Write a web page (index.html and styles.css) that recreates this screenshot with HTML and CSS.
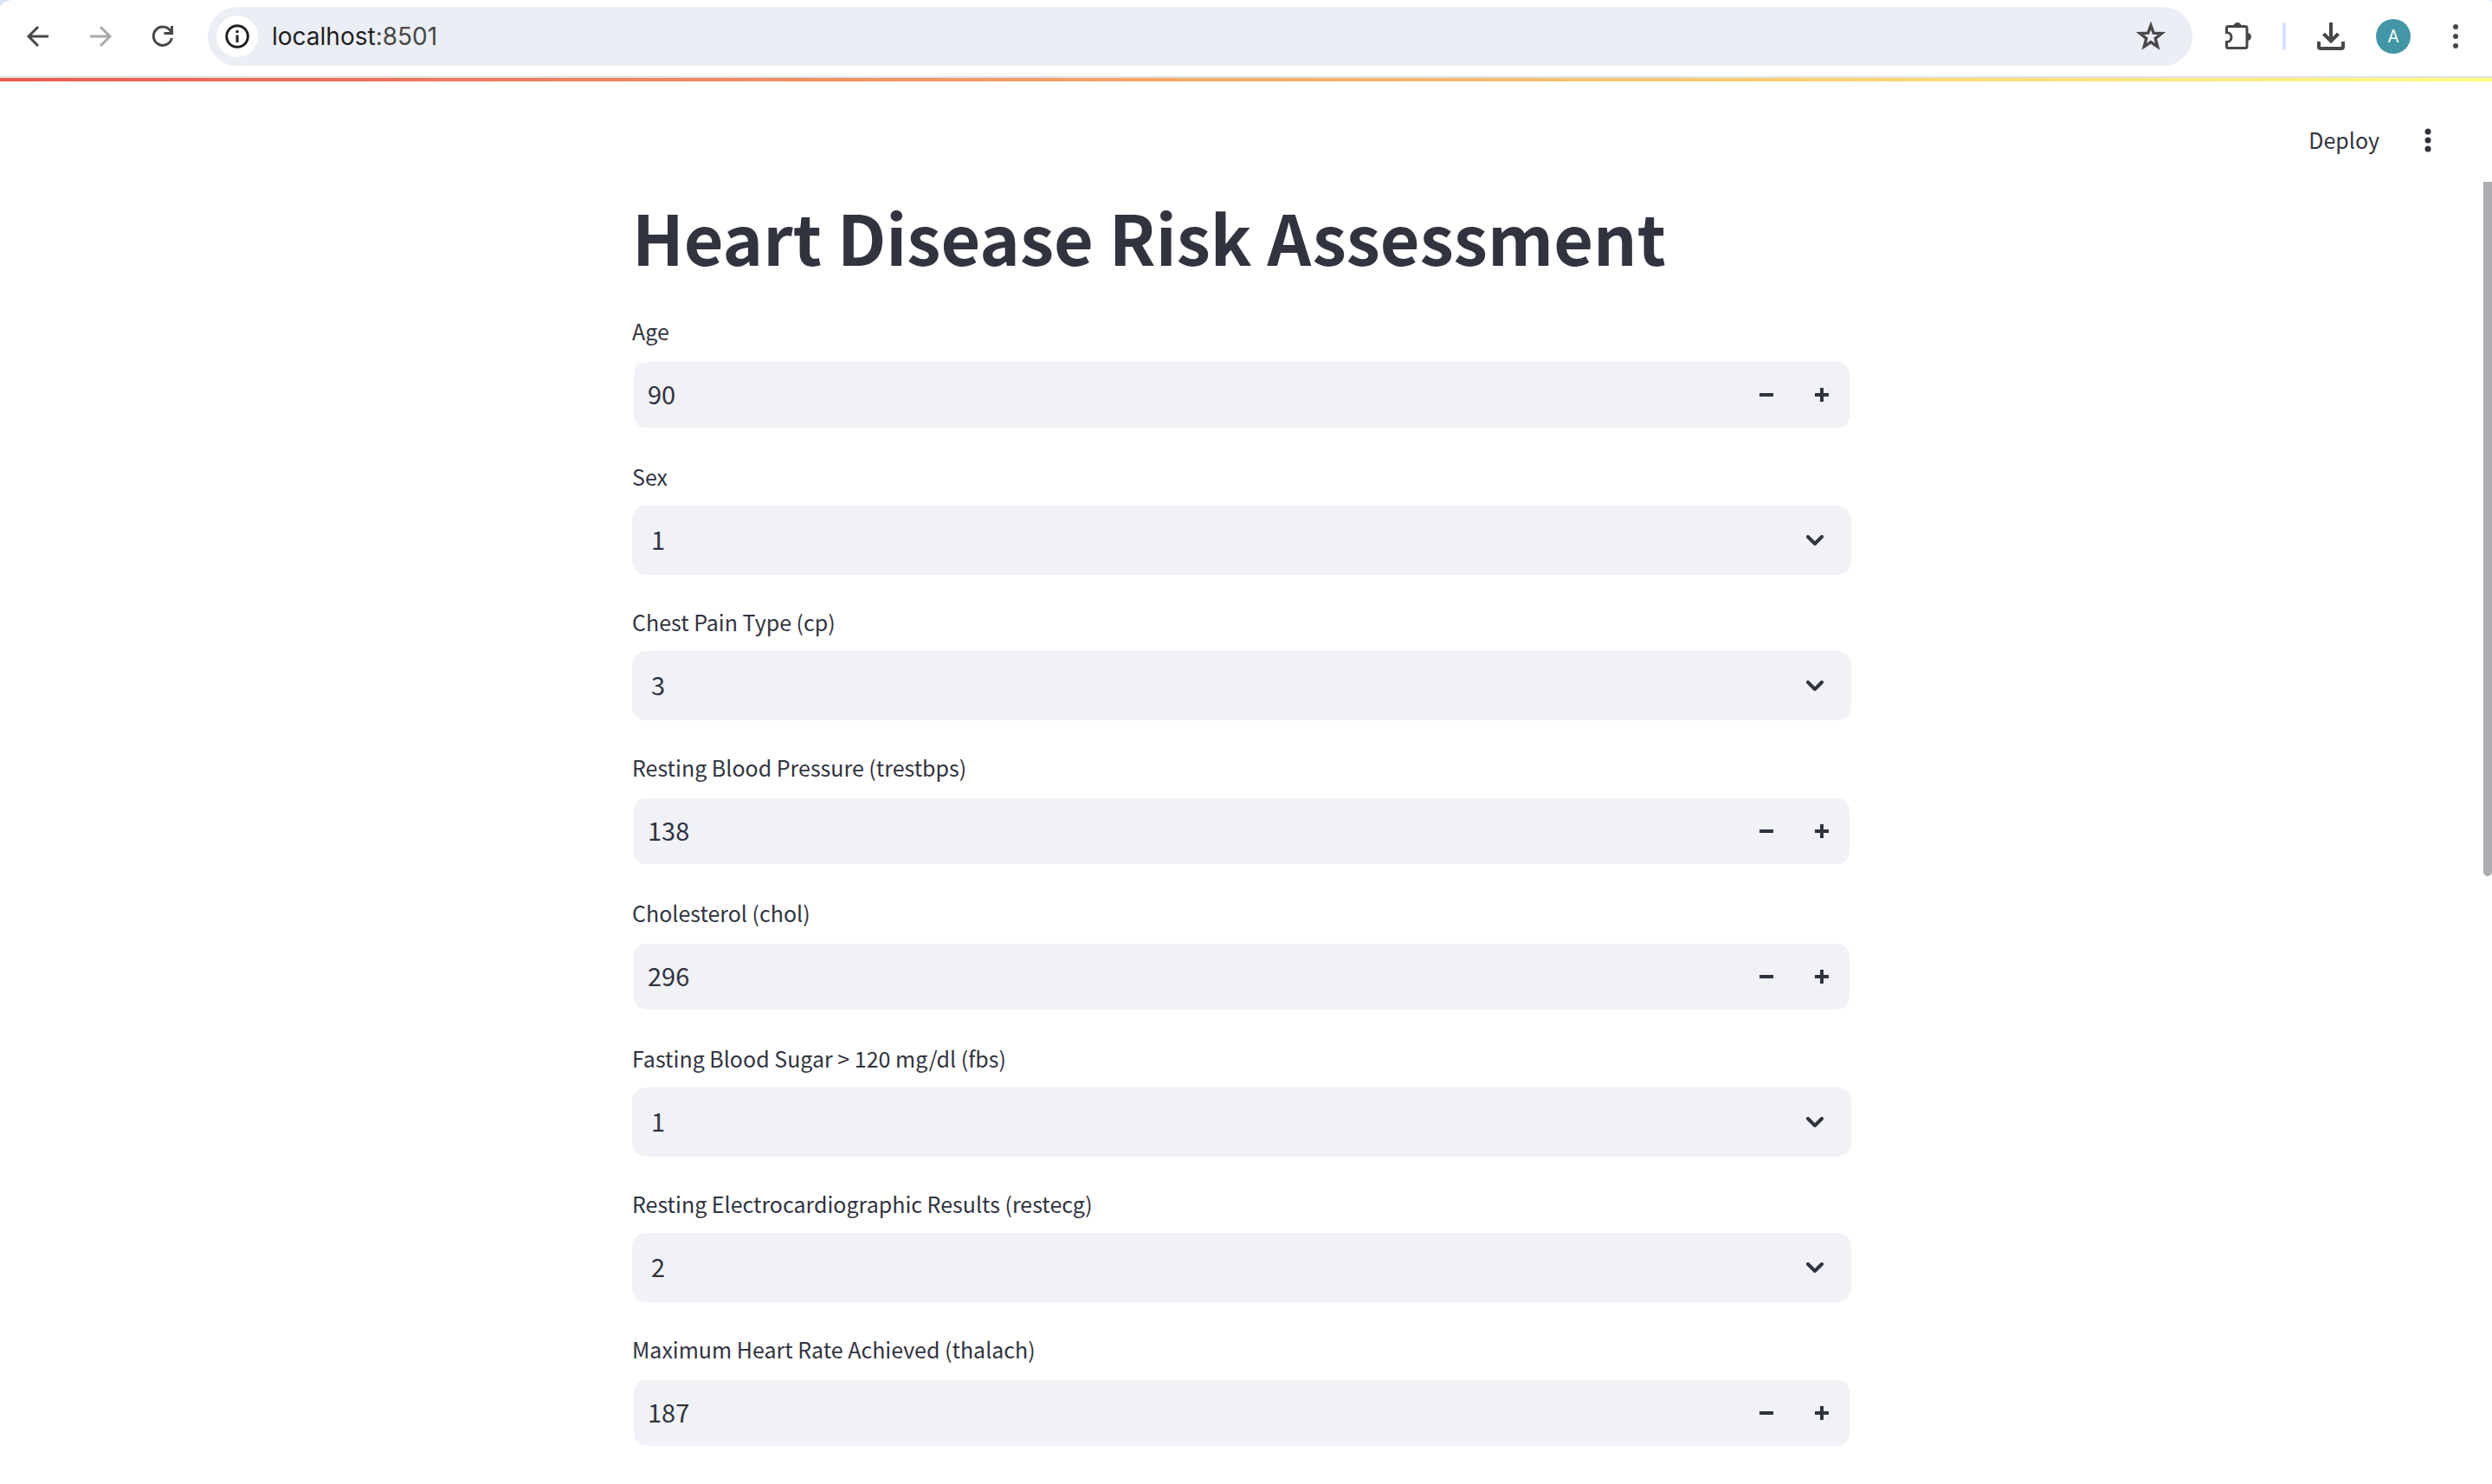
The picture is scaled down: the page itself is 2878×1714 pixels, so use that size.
FILE: index.html
```html
<!DOCTYPE html>
<html lang="en">
<head>
<meta charset="utf-8">
<title>Heart Disease Risk Assessment</title>
<link rel="stylesheet" href="styles.css">
</head>
<body>
<nav class="browser" aria-label="Browser toolbar">
  <button class="tool" type="button" aria-label="Back"><svg width="32" height="32" viewBox="0 0 32 32"><path d="M28 16H6M16 5L5 16L16 27" fill="none" stroke="#474747" stroke-width="3"/></svg></button>
  <button class="tool" type="button" aria-label="Forward" disabled><svg width="32" height="32" viewBox="0 0 32 32"><path d="M4 16H26M16 5L27 16L16 27" fill="none" stroke="#aaa" stroke-width="3"/></svg></button>
  <button class="tool" type="button" aria-label="Reload"><svg width="32" height="32" viewBox="0 0 32 32"><path d="M25.6 11A10.7 10.7 0 1 0 26.4 18" fill="none" stroke="#474747" stroke-width="3"/><path d="M26.500 4V12.500H17.500" fill="none" stroke="#474747" stroke-width="3"/></svg></button>
  <div class="address">
    <button class="site-info" type="button" aria-label="Site information"><svg width="32" height="32" viewBox="0 0 32 32"><circle cx="16" cy="16" r="12.300" fill="none" stroke="#1f1f1f" stroke-width="3"/><path d="M16 14.500V23" stroke="#1f1f1f" stroke-width="3"/><circle cx="16" cy="10.500" r="1.800" fill="#1f1f1f"/></svg></button>
    <a class="url" href="http://localhost:8501">localhost<span class="port">:8501</span></a>
    <button class="tool star" type="button" aria-label="Bookmark"><svg width="36" height="36" viewBox="0 0 36 36"><path d="M18 5.500L21.200 14.200L30.500 14.600L23.200 20.400L25.700 29.800L18 24.500L10.300 29.800L12.800 20.400L5.500 14.600L14.800 14.200Z" fill="none" stroke="#474747" stroke-width="3.400"/></svg></button>
  </div>
  <div class="actions">
    <button class="tool" type="button" aria-label="Extensions"><svg width="36" height="36" viewBox="0 0 36 36"><path d="M5.500 8.500a2 2 0 0 1 2-2H27a2 2 0 0 1 2 2V29.500a2 2 0 0 1-2 2H7.500a2 2 0 0 1-2-2V24.500a5.500 5.500 0 0 0 0-11Z" fill="none" stroke="#474747" stroke-width="3"/><path d="M13.500 6a4.500 4 0 0 1 9 0ZM29.500 14a4.500 4.500 0 0 1 0 9Z" fill="#474747"/></svg></button>
    <span class="divider"></span>
    <button class="tool" type="button" aria-label="Downloads"><svg width="36" height="36" viewBox="0 0 36 36"><path d="M18 2V23M9.500 15L18 23.500L26.500 15M4 24V30a2 2 0 0 0 2 2H30a2 2 0 0 0 2-2V24" fill="none" stroke="#474747" stroke-width="4"/></svg></button>
    <button class="avatar" type="button" aria-label="Profile">A</button>
    <button class="tool" type="button" aria-label="Browser menu"><svg width="36" height="36" viewBox="0 0 36 36" fill="#474747"><circle cx="18" cy="7" r="3"/><circle cx="18" cy="18" r="3"/><circle cx="18" cy="29" r="3"/></svg></button>
  </div>
</nav>
<div class="decoration"></div>
<header class="app-header">
  <button class="deploy" type="button">Deploy</button>
  <button class="tool" type="button" aria-label="App menu"><svg width="36" height="36" viewBox="0 0 36 36" fill="#31333f"><circle cx="18" cy="8" r="3.500"/><circle cx="18" cy="18" r="3.500"/><circle cx="18" cy="28" r="3.500"/></svg></button>
</header>
<div class="viewport">
  <main class="content">
    <h1 class="title">Heart Disease Risk Assessment</h1>
    <form class="form">
      <div class="field">
        <label class="label" for="age">Age</label>
        <div class="number"><input class="value" id="age" type="number" value="90"><button class="step" type="button" aria-label="Decrease"><svg width="16" height="16"><path d="M0 8H16" stroke="#31333f" stroke-width="4"/></svg></button><button class="step" type="button" aria-label="Increase"><svg width="16" height="16"><path d="M0 8H16M8 0V16" stroke="#31333f" stroke-width="4"/></svg></button></div>
      </div>
      <div class="field">
        <label class="label" for="sex">Sex</label>
        <div class="choice"><select class="picker" id="sex"><option>0</option><option selected>1</option></select><svg class="chevron" width="20" height="12"><path d="M2 2L10 10L18 2" /></svg></div>
      </div>
      <div class="field">
        <label class="label" for="cp">Chest Pain Type (cp)</label>
        <div class="choice"><select class="picker" id="cp"><option>0</option><option>1</option><option>2</option><option selected>3</option></select><svg class="chevron" width="20" height="12"><path d="M2 2L10 10L18 2" /></svg></div>
      </div>
      <div class="field">
        <label class="label" for="trestbps">Resting Blood Pressure (trestbps)</label>
        <div class="number"><input class="value" id="trestbps" type="number" value="138"><button class="step" type="button" aria-label="Decrease"><svg width="16" height="16"><path d="M0 8H16" stroke="#31333f" stroke-width="4"/></svg></button><button class="step" type="button" aria-label="Increase"><svg width="16" height="16"><path d="M0 8H16M8 0V16" stroke="#31333f" stroke-width="4"/></svg></button></div>
      </div>
      <div class="field">
        <label class="label" for="chol">Cholesterol (chol)</label>
        <div class="number"><input class="value" id="chol" type="number" value="296"><button class="step" type="button" aria-label="Decrease"><svg width="16" height="16"><path d="M0 8H16" stroke="#31333f" stroke-width="4"/></svg></button><button class="step" type="button" aria-label="Increase"><svg width="16" height="16"><path d="M0 8H16M8 0V16" stroke="#31333f" stroke-width="4"/></svg></button></div>
      </div>
      <div class="field">
        <label class="label" for="fbs">Fasting Blood Sugar &gt; 120 mg/dl (fbs)</label>
        <div class="choice"><select class="picker" id="fbs"><option>0</option><option selected>1</option></select><svg class="chevron" width="20" height="12"><path d="M2 2L10 10L18 2" /></svg></div>
      </div>
      <div class="field">
        <label class="label" for="restecg">Resting Electrocardiographic Results (restecg)</label>
        <div class="choice"><select class="picker" id="restecg"><option>0</option><option>1</option><option selected>2</option></select><svg class="chevron" width="20" height="12"><path d="M2 2L10 10L18 2" /></svg></div>
      </div>
      <div class="field">
        <label class="label" for="thalach">Maximum Heart Rate Achieved (thalach)</label>
        <div class="number"><input class="value" id="thalach" type="number" value="187"><button class="step" type="button" aria-label="Decrease"><svg width="16" height="16"><path d="M0 8H16" stroke="#31333f" stroke-width="4"/></svg></button><button class="step" type="button" aria-label="Increase"><svg width="16" height="16"><path d="M0 8H16M8 0V16" stroke="#31333f" stroke-width="4"/></svg></button></div>
      </div>
    </form>
  </main>
  <div class="scrollbar"><div class="thumb"></div></div>
</div>
</body>
</html>
```

FILE: styles.css
```css
* { box-sizing: border-box; }

body {
  margin: 0;
  min-height: 100vh;
  display: flex;
  flex-direction: column;
  background: linear-gradient(#d3e3fd 0 20px, #fff 20px);
  color: #31333f;
  font-family: "Noto Sans CJK SC", "Noto Sans", sans-serif;
}

button {
  border: 0;
  padding: 0;
  background: none;
  color: inherit;
  font: inherit;
}

svg { display: block; }

/* Browser toolbar */
.browser {
  display: flex;
  align-items: center;
  gap: 40px;
  padding: 8px 24px 12px 28px;
  border-bottom: 2px solid #e0e4e1;
  border-radius: 15px 4px 0 0 / 9px 4px 0 0;
  background: #fff;
}

.tool { display: flex; }

.address {
  flex: 1;
  display: flex;
  align-items: center;
  height: 68px;
  margin-left: -4px;
  padding: 0 30px 0 10px;
  border-radius: 34px;
  background: #eceef6;
}

.site-info {
  display: grid;
  place-items: center;
  width: 48px;
  height: 48px;
  border-radius: 50%;
  background: #fff;
}

.url {
  flex: 1;
  padding-left: 16px;
  color: #1f1f1f;
  font: 28px/36px Inter, sans-serif;
  text-decoration: none;
}

.port { color: #474747; }

.actions {
  display: flex;
  align-items: center;
  gap: 34px;
  margin-left: -6px;
}

.divider {
  width: 4px;
  height: 32px;
  border-radius: 2px;
  background: #d3e0fb;
}

.avatar {
  width: 40px;
  height: 40px;
  border-radius: 50%;
  background: #4396a6;
  color: #fff;
  font: 20px/40px Roboto, sans-serif;
}

/* App header */
.decoration {
  height: 4px;
  background: linear-gradient(90deg, #ec5953, #fffd80);
}

.app-header {
  display: flex;
  justify-content: flex-end;
  align-items: center;
  gap: 38px;
  height: 116px;
  padding: 20px 56px 0 0;
}

.deploy {
  padding-bottom: 2px;
  font-size: 25px;
  line-height: 40px;
}

/* Scrolling page */
.viewport {
  flex: 1;
  display: flex;
}

.content {
  flex: 1;
  max-width: 1408px;
  margin: 0 auto;
  padding: 10px 0 42px;
}

.title {
  margin: 0;
  padding-bottom: 34px;
  font-size: 79px;
  line-height: 106px;
  font-weight: 700;
}

.form {
  display: flex;
  flex-direction: column;
  gap: 32px;
}

.label {
  display: block;
  height: 56px;
  font-size: 25px;
  line-height: 44px;
}

.number {
  display: flex;
  height: 80px;
  border: 2px solid #fff;
  border-radius: 16px;
  background: #f0f2f6;
}

.value {
  flex: 1;
  min-width: 0;
  border: 0;
  padding: 0 16px 4px;
  background: none;
  color: inherit;
  font: 29px/40px "Noto Sans CJK SC", sans-serif;
  appearance: textfield;
}

.value::-webkit-inner-spin-button { display: none; }

.step {
  display: grid;
  place-items: center;
  width: 64px;
}

.choice {
  display: grid;
  align-items: center;
}

.picker {
  grid-area: 1 / 1;
  height: 80px;
  border: 0;
  border-radius: 16px;
  padding: 0 60px 4px 22px;
  background: #f0f2f6;
  color: inherit;
  font: 29px/40px "Noto Sans CJK SC", sans-serif;
  appearance: none;
}

.chevron {
  grid-area: 1 / 1;
  justify-self: end;
  margin-right: 32px;
  fill: none;
  stroke: #31333f;
  stroke-width: 4;
  stroke-linecap: round;
  stroke-linejoin: round;
  pointer-events: none;
}

.scrollbar {
  display: grid;
  grid-template-rows: 8fr 7fr;
  width: 10px;
}

.thumb {
  border-radius: 0 0 5px 5px;
  background: #adadb2;
}
```
